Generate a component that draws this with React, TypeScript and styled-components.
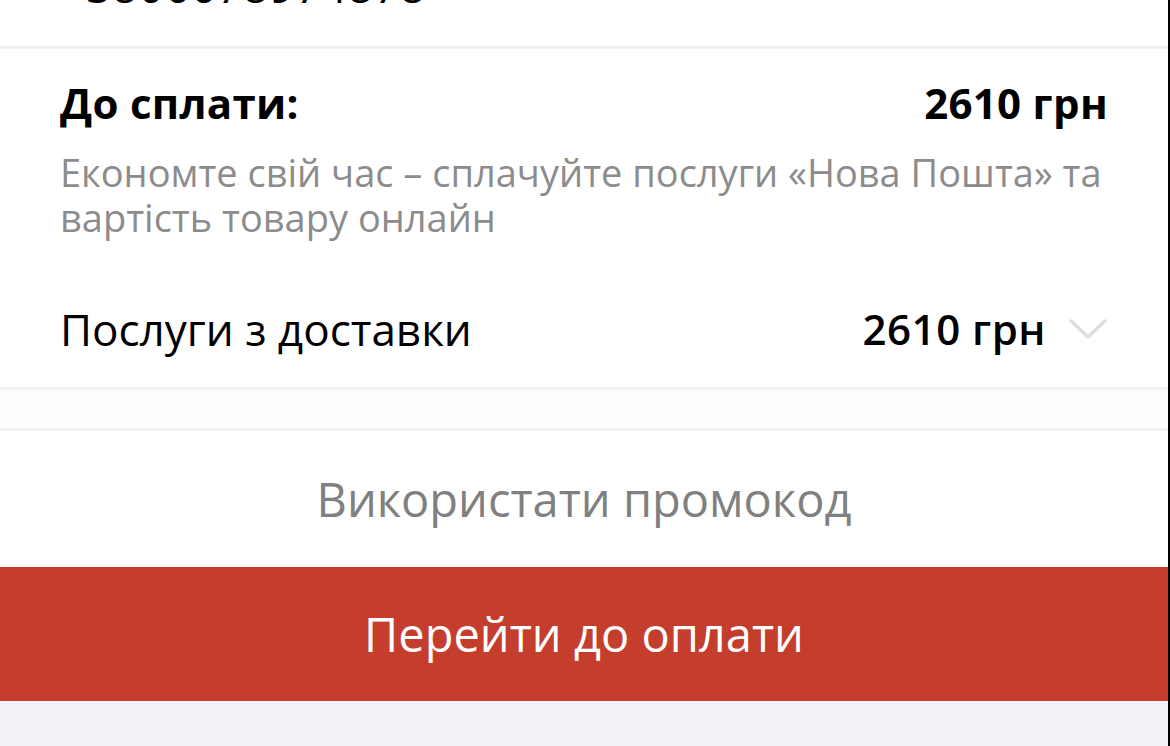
import React from "react";
import styled, { createGlobalStyle } from "styled-components";

const GlobalStyle = createGlobalStyle`
  html, body {
    margin: 0;
    padding: 0;
    background: #ffffff;
  }
  body {
    font-family: "Open Sans", "Noto Sans", sans-serif;
    color: #000;
  }
`;

const Screen = styled.div`
  width: 1168px;
  height: 746px;
  overflow: hidden;
  border-right: 2px solid #000;
  display: flex;
  flex-direction: column;
  background: #fff;
`;

const Section = styled.div<{ $pad?: string }>`
  padding: ${(p) => p.$pad || "0 60px"};
  border-bottom: 3px solid #f1f2f4;
`;

const Phone = styled.div`
  font-size: 44px;
  line-height: 1;
  margin-top: -36px;
  padding-bottom: 38px;
  letter-spacing: 1px;
`;

const Row = styled.div`
  display: flex;
  align-items: center;
  justify-content: space-between;
`;

const TotalText = styled.div`
  font-size: 42px;
  font-weight: 700;
  line-height: 52px;
  letter-spacing: 0.3px;
`;

const Hint = styled.p`
  margin: 21px 0 0;
  font-size: 38px;
  line-height: 45px;
  color: #8c8c8c;
`;

const ServiceRow = styled(Row)`
  margin-top: 63px;
  padding-bottom: 32px;
`;

const ServiceLabel = styled.div`
  font-size: 44px;
  line-height: 52px;
`;

const ServiceSum = styled.div`
  display: flex;
  align-items: center;
  gap: 22px;
  font-size: 42px;
  font-weight: 600;
  line-height: 52px;
  letter-spacing: 0.5px;
`;

const Chevron = () => (
  <svg width="40" height="24" viewBox="0 0 40 24" fill="none">
    <path
      d="M3 4 L20 20 L37 4"
      stroke="#dedede"
      strokeWidth="3.5"
      strokeLinecap="round"
      strokeLinejoin="round"
    />
  </svg>
);

const Spacer = styled.div`
  height: 38px;
  background: #fdfdfd;
  border-bottom: 3px solid #f1f2f4;
`;

const Promo = styled.button`
  height: 136px;
  flex-shrink: 0;
  border: 0;
  background: #fff;
  font-family: inherit;
  font-size: 47px;
  color: #808080;
  cursor: pointer;
`;

const PayButton = styled.button`
  height: 134px;
  flex-shrink: 0;
  border: 0;
  background: #c43d2d;
  color: #fff;
  font-family: inherit;
  font-size: 47px;
  cursor: pointer;
`;

const Footer = styled.div`
  flex: 1;
  background: #f1f3f7;
`;

export default function App() {
  return (
    <>
      <GlobalStyle />
      <Screen>
        <Section>
          <Phone>+3806678974878</Phone>
        </Section>
        <Section $pad="28px 60px 0">
          <Row>
            <TotalText>До сплати:</TotalText>
            <TotalText>2610 грн</TotalText>
          </Row>
          <Hint>
            Економте свій час – сплачуйте послуги «Нова Пошта» та вартість
            товару онлайн
          </Hint>
          <ServiceRow>
            <ServiceLabel>Послуги з доставки</ServiceLabel>
            <ServiceSum>
              2610 грн
              <Chevron />
            </ServiceSum>
          </ServiceRow>
        </Section>
        <Spacer />
        <Promo>Використати промокод</Promo>
        <PayButton>Перейти до оплати</PayButton>
        <Footer />
      </Screen>
    </>
  );
}
